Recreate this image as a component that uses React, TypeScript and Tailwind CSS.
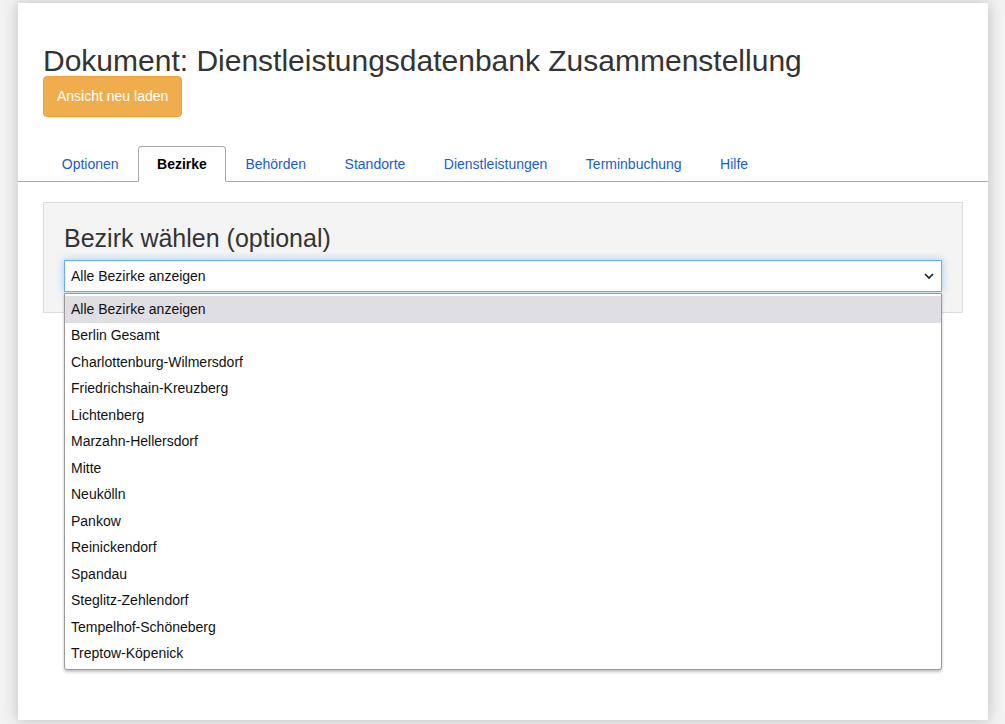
import React from "react";

const tabs = ["Optionen", "Bezirke", "Behörden", "Standorte", "Dienstleistungen", "Terminbuchung", "Hilfe"];

const bezirke = [
  "Alle Bezirke anzeigen",
  "Berlin Gesamt",
  "Charlottenburg-Wilmersdorf",
  "Friedrichshain-Kreuzberg",
  "Lichtenberg",
  "Marzahn-Hellersdorf",
  "Mitte",
  "Neukölln",
  "Pankow",
  "Reinickendorf",
  "Spandau",
  "Steglitz-Zehlendorf",
  "Tempelhof-Schöneberg",
  "Treptow-Köpenick",
];

export default function App() {
  return (
    <div className="min-h-[724px] bg-[#f2f2f2] pt-[3px] px-[18px] font-['Liberation_Sans',Arial,sans-serif] text-[#333]">
      <div className="bg-white h-[717px] w-[970px] shadow-[0_0_14px_rgba(0,0,0,0.22)]">
        {/* Header */}
        <div className="px-[25px] pt-[42px]">
          <h1 className="text-[30px] leading-[31px] text-[#333]">
            Dokument: Dienstleistungsdatenbank Zusammenstellung
          </h1>
          <button className="h-[41px] px-[13px] bg-[#f0ad4e] border border-[#eea236] rounded-[4px] text-white text-[14px]">
            Ansicht neu laden
          </button>
        </div>

        {/* Tabs */}
        <div className="mt-[29px] border-b border-[#aaaaaa] pl-[24.5px] flex h-[36px]">
          {tabs.map((t) => {
            const active = t === "Bezirke";
            return (
              <div
                key={t}
                className={
                  active
                    ? "h-[36px] -mb-px px-[18.25px] border border-[#aaaaaa] border-b-white bg-white rounded-t-[4px] flex items-center text-[14px] font-bold text-black"
                    : "h-[36px] px-[18.25px] border border-transparent flex items-center text-[14px] text-[#1d5ccc]"
                }
              >
                {t}
              </div>
            );
          })}
        </div>

        {/* Well */}
        <div className="mx-[25px] mt-[20px] bg-[#f4f4f4] border border-[#dcdcdc] h-[111px] px-[20px] pt-[19px] relative">
          <h2 className="text-[25px] leading-[32px] text-[#333]">Bezirk wählen (optional)</h2>
          <div className="mt-[6px] h-[32px] bg-white border border-[#66afe9] shadow-[0_0_8px_rgba(102,175,233,0.6)] flex items-center justify-between pl-[6px] pr-[5px] text-[14px] text-[#111]">
            <span>Alle Bezirke anzeigen</span>
            <svg width="12" height="8" viewBox="0 0 12 8" className="mr-[1px]">
              <path d="M2 2 L6 6 L10 2" fill="none" stroke="#222" strokeWidth="1.7" />
            </svg>
          </div>

          {/* Open dropdown list */}
          <div className="absolute left-[20px] right-[20px] top-[90px] bg-white border border-[#9a9a9a] rounded-b-[3px] shadow-[0_2px_3px_rgba(0,0,0,0.25)] pt-[2px] pb-[2px] z-10">
            {bezirke.map((b, i) => (
              <div
                key={b}
                className={
                  (i === 0 ? "bg-[#dfdee3] " : "") +
                  "h-[26.5px] flex items-center pl-[6px] text-[14px] text-[#111]"
                }
              >
                {b}
              </div>
            ))}
          </div>
        </div>
      </div>
    </div>
  );
}
